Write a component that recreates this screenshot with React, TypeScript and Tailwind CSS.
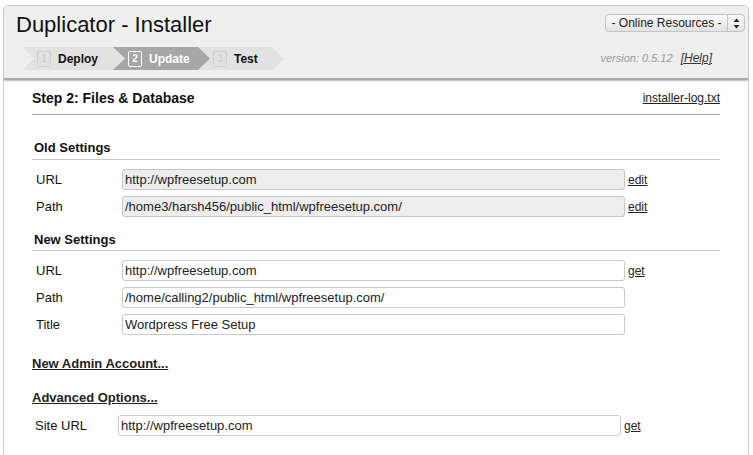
import React from "react";

const font = "font-['Liberation_Sans',Arial,sans-serif]";

function Step({ num, label, active, width, first }: { num: string; label: string; active?: boolean; width: string; first?: boolean }) {
    return (
        <div
            className={`${width} ${first ? "" : "-ml-[13px]"} h-[23px] flex items-center pl-[15px] [clip-path:polygon(0_0,calc(100%-12px)_0,100%_50%,calc(100%-12px)_100%,0_100%,12px_50%)] ${active ? "bg-[#a6a6a6]" : "bg-[#e2e2e2]"}`}
        >
            <span
                className={`w-[14px] h-[16px] flex items-center justify-center text-[10px] rounded-[2px] border ${active ? "border-white text-white font-bold" : "border-[#cfcfcf] text-[#c9c9c9]"}`}
            >
                {num}
            </span>
            <span className={`ml-[7px] text-[12px] font-bold ${active ? "text-white" : "text-[#111]"}`}>{label}</span>
        </div>
    );
}

function Row({ label, value, readOnly, link, labelW = "w-[86px]", inputW = "w-[503px]", pl = "pl-[4px]" }: { label: string; value: string; readOnly?: boolean; link?: string; labelW?: string; inputW?: string; pl?: string }) {
    return (
        <div className={`h-[27px] flex items-center ${pl}`}>
            <div className={`${labelW} text-[13px] text-[#111]`}>{label}</div>
            <div
                className={`${inputW} h-[21px] flex items-center px-[2px] text-[13px] text-[#222] border rounded-[3px] ${readOnly ? "bg-[#ededed] border-[#c6c6c6]" : "bg-white border-[#c9c9c9]"}`}
            >
                {value}
            </div>
            {link && <a className="ml-[3px] text-[12px] text-[#222] underline">{link}</a>}
        </div>
    );
}

export default function App() {
    return (
        <div className={`${font} bg-white w-[753px] h-[455px] overflow-hidden pt-[5px] pl-[3px]`}>
            <div className="w-[746px] h-[460px] border border-[#cfcfcf] rounded-t-[5px] bg-white">
                <div className="h-[74px] bg-[#efefef] rounded-t-[5px] border-b-[2px] border-[#a9a9a9] shadow-[0_1px_2px_#bbb] flex justify-between">
                    <div className="pl-[12px] pt-[5px]">
                        <div className="text-[22px] leading-[28px] text-[#111]">Duplicator - Installer</div>
                        <div className="flex mt-[8px] ml-[6px]">
                            <Step num="1" label="Deploy" width="w-[104px]" first />
                            <Step num="2" label="Update" width="w-[98px]" active />
                            <Step num="3" label="Test" width="w-[86px]" />
                        </div>
                    </div>
                    <div className="pr-[3px] pt-[8px] flex flex-col items-end">
                        <div className="w-[140px] h-[18px] flex items-center rounded-[4px] border border-[#c4c4c4] bg-gradient-to-b from-[#fbfbfb] to-[#e3e3e3] text-[12px] text-[#222]">
                            <div className="flex-1 text-center">- Online Resources -</div>
                            <div className="w-[17px] h-full border-l border-[#c4c4c4] flex items-center justify-center">
                                <svg width="7" height="11" viewBox="0 0 7 11">
                                    <path d="M3.5 0.5 L6.5 4 L0.5 4 Z" fill="#222" />
                                    <path d="M3.5 10.5 L6.5 7 L0.5 7 Z" fill="#222" />
                                </svg>
                            </div>
                        </div>
                        <div className="mt-[17px] mr-[33px] text-[11px] italic text-[#9a9a9a]">
                            version: 0.5.12 <a className="ml-[5px] text-[12px] text-[#333] underline">[Help]</a>
                        </div>
                    </div>
                </div>

                <div className="px-[28px]">
                    <div className="pt-[9px] pb-[7px] border-b border-[#a8a8a8] flex justify-between items-center leading-[18px]">
                        <div className="text-[14px] font-bold text-[#111]">Step 2: Files &amp; Database</div>
                        <a className="text-[12px] text-[#222] underline">installer-log.txt</a>
                    </div>

                    <div className="mt-[24px] pb-[2px] pl-[2px] border-b border-[#c8c8c8] text-[13px] leading-[18px] font-bold text-[#111]">Old Settings</div>
                    <div className="mt-[6px]">
                        <Row label="URL" value="http://wpfreesetup.com" readOnly link="edit" />
                        <Row label="Path" value="/home3/harsh456/public_html/wpfreesetup.com/" readOnly link="edit" />
                    </div>

                    <div className="mt-[11px] pb-[1px] pl-[2px] border-b border-[#c8c8c8] text-[13px] leading-[18px] font-bold text-[#111]">New Settings</div>
                    <div className="mt-[6px]">
                        <Row label="URL" value="http://wpfreesetup.com" link="get" />
                        <Row label="Path" value="/home/calling2/public_html/wpfreesetup.com/" />
                        <Row label="Title" value="Wordpress Free Setup" />
                    </div>

                    <div className="mt-[17px] text-[13px] leading-[18px] font-bold text-[#222] underline">New Admin Account...</div>
                    <div className="mt-[16px] text-[13px] leading-[18px] font-bold text-[#222] underline">Advanced Options...</div>
                    <div className="mt-[5px]">
                        <Row label="Site URL" value="http://wpfreesetup.com" link="get" labelW="w-[83px]" pl="pl-[3px]" />
                    </div>
                </div>
            </div>
        </div>
    );
}
